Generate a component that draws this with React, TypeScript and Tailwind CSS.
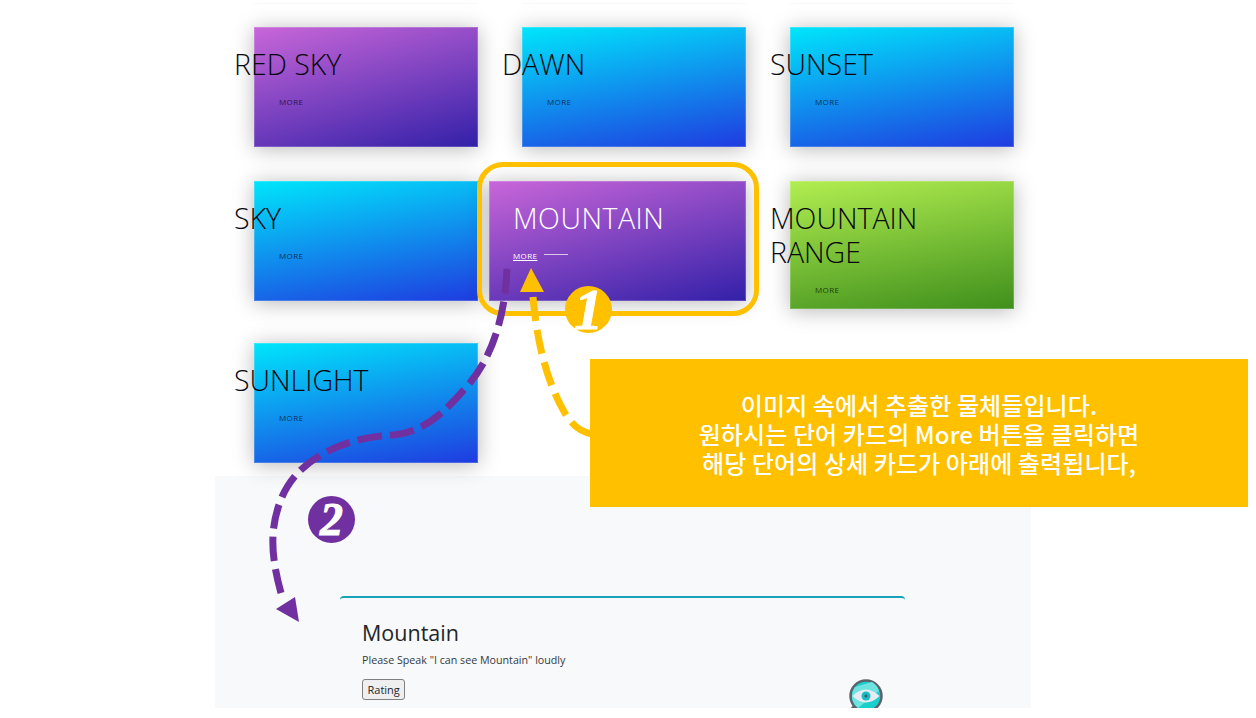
import React from "react";

type Item = { title: string; tone: "purple" | "blue" | "green"; active?: boolean };

const items: Item[] = [
  { title: "RED SKY", tone: "purple" },
  { title: "DAWN", tone: "blue" },
  { title: "SUNSET", tone: "blue" },
  { title: "SKY", tone: "blue" },
  { title: "MOUNTAIN", tone: "purple", active: true },
  { title: "MOUNTAIN RANGE", tone: "green" },
  { title: "SUNLIGHT", tone: "blue" },
];

const tones = {
  purple: "bg-[linear-gradient(165deg,#c966d9_0%,#3220a8_100%)]",
  blue: "bg-[linear-gradient(170deg,#00e6fb_0%,#1f3be0_100%)]",
  green: "bg-[linear-gradient(170deg,#b2ee50_0%,#3f8f1c_100%)]",
};

function Card({ title, tone, active }: Item) {
  return (
    <div
      className={`${tones[tone]} min-h-[120px] pt-[20px] ring-1 ring-inset ring-white/20 shadow-[0_2px_20px_rgba(0,0,0,0.28)] ${
        active ? "-ml-[33px] pl-[24px]" : ""
      }`}
    >
      <h3
        className={`text-[28.5px] leading-[34px] font-light font-['Open_Sans',sans-serif] ${
          active ? "text-white tracking-[0.5px]" : "text-[#08080f] -ml-[20px] w-[210px]"
        }`}
      >
        {title}
      </h3>
      <div
        className={`mt-[14px] mb-[12px] flex items-center h-[14px] text-[8px] tracking-[0.4px] font-['Open_Sans',sans-serif] ${
          active ? "text-white" : "text-[#000000]/70 ml-[25px]"
        }`}
      >
        <span className={active ? "underline" : ""}>MORE</span>
        {active && <span className="ml-[7px] -mt-[3px] w-[24px] h-[1.5px] bg-white/70" />}
      </div>
    </div>
  );
}

function EyeIcon() {
  return (
    <svg width="36" height="36" viewBox="0 0 36 36" className="mt-[61px] shrink-0">
      <path d="M7 28 L1 35" stroke="#5b646d" strokeWidth="5" strokeLinecap="round" />
      <circle cx="18" cy="17" r="15.5" fill="#19cfcc" stroke="#5b646d" strokeWidth="2.5" />
      <path d="M7 8 L24 3 A15 15 0 0 1 31 12 L10 29 A15 15 0 0 1 7 8 Z" fill="#6fe3df" />
      <path d="M4.5 17 Q18 4 31.5 17 Q18 30 4.5 17 Z" fill="#e9ebf2" />
      <circle cx="18" cy="17" r="4.5" fill="#16bcc4" />
      <circle cx="18" cy="17" r="1.6" fill="#4a5a6a" />
    </svg>
  );
}

export default function App() {
  return (
    <div className="relative w-[1256px] h-[718px] overflow-hidden bg-white font-['Open_Sans',sans-serif]">
      <div className="pt-[3px] pb-[13px] pl-[254px]">
        <div className="grid grid-cols-[224px_224px_224px] gap-x-[44px] mb-[23px]">
          <div className="h-px bg-[#f8f8f8]" />
          <div className="h-px bg-[#f8f8f8]" />
          <div className="h-px bg-[#f8f8f8]" />
        </div>
        <div className="grid grid-cols-[224px_224px_224px] gap-x-[44px] gap-y-[34px] items-start">
          {items.map((item) => (
            <Card key={item.title} {...item} />
          ))}
        </div>
      </div>

      <section className="ml-[215px] w-[816px] h-[232px] overflow-hidden bg-[#f8f9fa] pt-[120px] pl-[125px]">
        <div className="w-[565px] h-[200px] rounded-[4px] border-t-2 border-[#17a2b8] flex justify-between pl-[22px] pr-[21px] pt-[20px]">
          <div>
            <h2 className="text-[21.5px] leading-[30px] text-[#212529]">Mountain</h2>
            <p className="mt-[5px] text-[10.7px] leading-[14px] text-[#343a40]">
              Please Speak "I can see Mountain" loudly
            </p>
            <button className="mt-[12px] h-[21px] px-[4.5px] text-[11px] leading-none text-[#212529] bg-[#efefef] border border-[#808080] rounded-[3px]">
              Rating
            </button>
          </div>
          <EyeIcon />
        </div>
      </section>

      {/* annotations over the page */}
      <div className="absolute left-[477px] top-[162px] w-[282px] h-[154px] rounded-[26px] border-[5px] border-[#ffc000]" />

      <svg className="absolute left-0 top-0" width="1256" height="718" viewBox="0 0 1256 718" fill="none">
        <path d="M592 434 C581 432 573 426 566 415 C548 385 537 345 533 297" pathLength={156} stroke="#ffc000" strokeWidth="7" strokeDasharray="24 9" />
        <path d="M531 268 L520 292 L544 292 Z" fill="#ffc000" />
        <path d="M507 269 C505 320 490 360 468 385 C445 412 425 432 393 435 C350 437 300 455 282 497 C268 530 272 560 281 593" pathLength={440} stroke="#7030a0" strokeWidth="7" strokeDasharray="24 8" />
        <path d="M295 597 L276 609 L299 622 Z" fill="#7030a0" />
      </svg>

      <div className="absolute left-[565px] top-[286px] w-[47px] h-[47px] rounded-full bg-[#ffc000] flex items-center justify-center text-white text-[58px] leading-none font-bold italic [-webkit-text-stroke:1px_white] font-['Liberation_Serif',serif]">
        1
      </div>
      <div className="absolute left-[308px] top-[496px] w-[47px] h-[47px] rounded-full bg-[#7030a0] flex items-center justify-center text-white text-[46px] leading-none font-bold italic [-webkit-text-stroke:1px_white] font-['Liberation_Serif',serif]">
        2
      </div>

      <div className="absolute left-[590px] top-[359px] w-[658px] h-[148px] bg-[#ffc000] flex flex-col items-center justify-center text-white text-[24px] leading-[29px] font-medium tracking-[0.1px] font-['Noto_Sans_CJK_KR',sans-serif]">
        <span>이미지 속에서 추출한 물체들입니다.</span>
        <span>원하시는 단어 카드의 More 버튼을 클릭하면</span>
        <span>해당 단어의 상세 카드가 아래에 출력됩니다,</span>
      </div>
    </div>
  );
}
